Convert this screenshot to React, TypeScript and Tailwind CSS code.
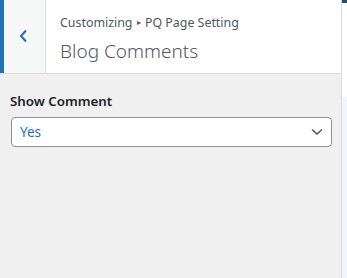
import React from "react";

export default function App() {
  return (
    <div className="flex w-[347px] h-[278px] overflow-hidden" style={{ fontFamily: '"Noto Sans", "Open Sans", sans-serif' }}>
      <div className="w-[342px] h-full bg-[#f0f0f1] border-r border-[#dcdcde] flex flex-col">
        <div className="flex h-[74px] bg-white border-b border-[#dcdcde]">
          <div className="w-[46px] h-full bg-[#f6f7f7] border-l-4 border-[#2271b1] border-r border-r-[#dcdcde] flex items-center justify-center">
            <svg width="12" height="14" viewBox="0 0 12 14" className="ml-[-2px] mt-[-2px]">
              <path d="M8 1.5 L3 7 L8 12.5" fill="none" stroke="#2271b1" strokeWidth="2" />
            </svg>
          </div>
          <div className="flex flex-col pl-[14px] pt-[12px]">
            <div className="text-[12.4px] leading-[20px] text-[#50575e]">
              Customizing <span className="text-[8px] align-[2px] mx-[1px]">▸</span> PQ Page Setting
            </div>
            <div className="text-[19px] leading-[28px] font-light text-[#50575e] mt-[4px]">Blog Comments</div>
          </div>
        </div>
        <div className="px-[10px] pt-[17px]">
          <div className="text-[13.3px] leading-[20px] font-semibold text-[#1d2327]">Show Comment</div>
          <div className="mt-[6px] ml-[1px] w-[321px] h-[30px] bg-white border border-[#8c8f94] rounded-[4px] flex items-center justify-between pl-[8px] pr-[8px]">
            <span className="text-[13.5px] text-[#2271b1]">Yes</span>
            <svg width="12" height="8" viewBox="0 0 12 8">
              <path d="M1 1.5 L6 6 L11 1.5" fill="none" stroke="#50575e" strokeWidth="1.6" />
            </svg>
          </div>
        </div>
      </div>
      <div className="flex-1 h-full flex flex-col bg-white">
        <div className="h-[3px] bg-[#1d4f7c]" />
        <div className="h-[94px]" />
        <div className="flex-1 bg-[#f0f6fc]" />
      </div>
    </div>
  );
}
